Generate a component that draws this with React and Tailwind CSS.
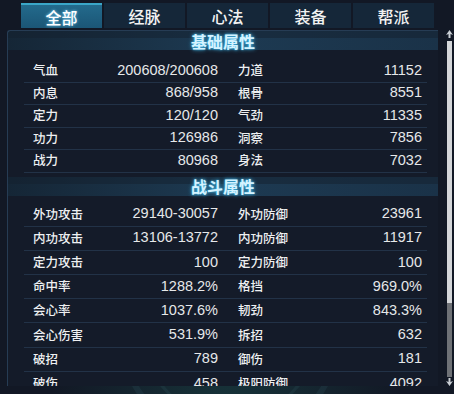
import React from "react";

const TABS = ["全部", "经脉", "心法", "装备", "帮派"];

const BASE = [
  ["气血", "200608/200608", "力道", "11152"],
  ["内息", "868/958", "根骨", "8551"],
  ["定力", "120/120", "气劲", "11335"],
  ["功力", "126986", "洞察", "7856"],
  ["战力", "80968", "身法", "7032"],
];

const BATTLE = [
  ["外功攻击", "29140-30057", "外功防御", "23961"],
  ["内功攻击", "13106-13772", "内功防御", "11917"],
  ["定力攻击", "100", "定力防御", "100"],
  ["命中率", "1288.2%", "格挡", "969.0%"],
  ["会心率", "1037.6%", "韧劲", "843.3%"],
  ["会心伤害", "531.9%", "拆招", "632"],
  ["破招", "789", "御伤", "181"],
  ["破伤", "458", "极阳防御", "4092"],
];

function SectionHeader({ title }) {
  return (
    <div className="relative flex h-[19px] items-center justify-center bg-gradient-to-r from-[#152636] via-[#1d3a52] to-[#1a3248]">
      <div className="absolute inset-x-0 top-0 h-[7px] bg-[#13202e]/50" />
      <span className="relative text-[16px] font-bold text-[#d4f3ff] [text-shadow:0_0_4px_#3fb4e6,0_0_2px_#3fb4e6]">
        {title}
      </span>
    </div>
  );
}

function StatRow({ row, tall }) {
  const [l1, v1, l2, v2] = row;
  return (
    <div
      className={`flex items-center border-b border-[#223247] pl-[9px] pr-[5px] ${tall ? "h-[24.2px]" : "h-[22.5px]"}`}
    >
      <div className="flex w-[185px] items-center justify-between">
        <span className="text-[12.5px] font-medium text-[#eef0f2]">{l1}</span>
        <span className="font-['Liberation_Sans','Noto_Sans_CJK_SC',sans-serif] text-[14.5px] text-[#e6e8ea]">{v1}</span>
      </div>
      <div className="ml-[20px] flex w-[184px] items-center justify-between">
        <span className="text-[12.5px] font-medium text-[#eef0f2]">{l2}</span>
        <span className="font-['Liberation_Sans','Noto_Sans_CJK_SC',sans-serif] text-[14.5px] text-[#e6e8ea]">{v2}</span>
      </div>
    </div>
  );
}

export default function App() {
  return (
    <div className="relative h-[394px] w-[454px] overflow-hidden bg-[#121825] font-['Noto_Sans_CJK_SC','Noto_Sans',sans-serif]">
      {/* faint emblem + teal glow behind the panel */}
      <div className="pointer-events-none absolute inset-0 bg-[radial-gradient(ellipse_at_50%_110%,#17343a_0%,transparent_55%)]" />
      <svg className="pointer-events-none absolute left-[110px] top-[210px] opacity-[0.06]" width="240" height="240" viewBox="0 0 240 240">
        <circle cx="120" cy="120" r="110" fill="none" stroke="#7fd0e0" strokeWidth="6" />
        <circle cx="120" cy="120" r="88" fill="none" stroke="#7fd0e0" strokeWidth="3" />
        <path d="M60 120 Q120 40 180 120 Q120 200 60 120Z" fill="none" stroke="#7fd0e0" strokeWidth="4" />
      </svg>

      {/* tabs */}
      <div className="relative flex gap-[2px] pl-[21px] pt-[3px]">
        {TABS.map((t, i) => (
          <div
            key={t}
            className={`flex h-[25px] w-[81px] items-center justify-center text-[16px] font-medium ${
              i === 0
                ? "border-t-2 border-[#3aa6c8] bg-gradient-to-b from-[#236a8c] to-[#1b5676] text-white [text-shadow:0_0_3px_#7fd8ff]"
                : "bg-[#152739] text-[#f2f2f2]"
            }`}
          >
            {t}
          </div>
        ))}
      </div>

      <div className="relative mt-[2px] flex">
        {/* panel */}
        <div className="relative ml-[7px] h-[356px] w-[431px] overflow-hidden rounded-tl-[3px] border-l border-t border-[#263c54] bg-[#141b29]">
          <div className="absolute left-[-1px] top-[-1px] h-[3px] w-[3px] rounded-full bg-[#5a8cb0]" />
          <SectionHeader title="基础属性" />
          <div className="ml-[16px] mt-[10px] w-[403px]">
            {BASE.map((r) => (
              <StatRow key={r[0]} row={r} />
            ))}
          </div>
          <div className="mt-[4px]">
            <SectionHeader title="战斗属性" />
          </div>
          <div className="ml-[16px] mt-[7px] w-[403px]">
            {BATTLE.map((r) => (
              <StatRow key={r[0]} row={r} tall />
            ))}
          </div>
        </div>

        {/* scrollbar */}
        <div className="ml-[8px] flex w-[7px] flex-col items-center">
          <svg width="7" height="9" viewBox="0 0 7 9">
            <path d="M3.5 0 L7 5 L4.5 4 L4.5 8 L2.5 8 L2.5 4 L0 5 Z" fill="#c9ced4" />
          </svg>
          <div className="mt-[2px] flex w-[5px] flex-1 flex-col bg-[#6e7176]">
            <div className="h-[262px] bg-[#d4d6d9]" />
          </div>
          <svg width="7" height="9" viewBox="0 0 7 9">
            <path d="M3.5 9 L7 4 L4.5 5 L4.5 1 L2.5 1 L2.5 5 L0 4 Z" fill="#c9ced4" />
          </svg>
        </div>
      </div>
    </div>
  );
}
